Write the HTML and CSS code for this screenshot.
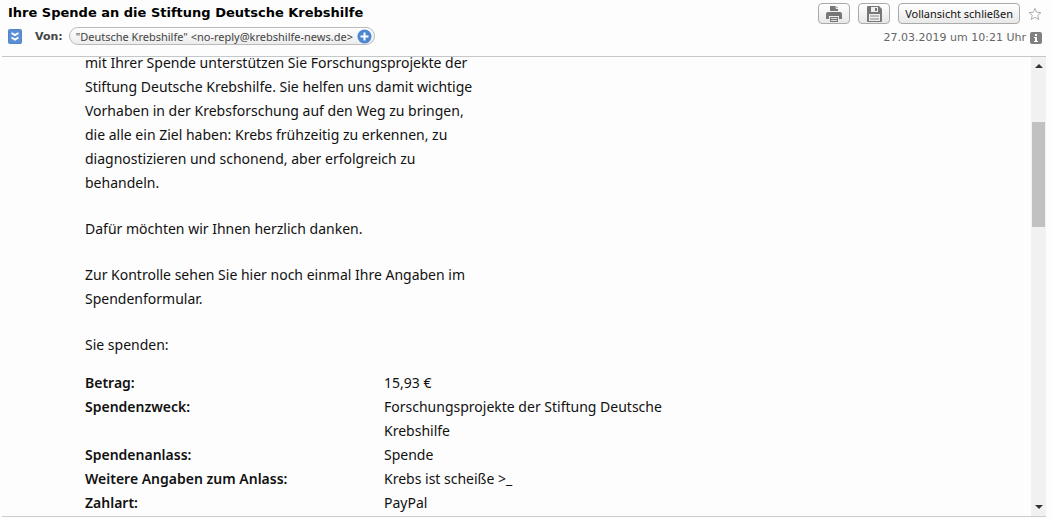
FILE: index.html
```html
<!DOCTYPE html>
<html lang="de">
<head>
    <meta charset="UTF-8">
    <meta name="viewport" content="width=device-width, initial-scale=1.0">
    <title>Ihre Spende an die Stiftung Deutsche Krebshilfe</title>
    <link rel="stylesheet" href="styles.css">
</head>
<body>
    <div class="mail">
        <header class="mail-header">
            <div class="header-left">
                <h1>Ihre Spende an die Stiftung Deutsche Krebshilfe</h1>
                <div class="sender-row">
                    <button class="icon-button expand" aria-label="Details anzeigen">
                        <svg width="14" height="15" viewBox="0 0 14 15">
                            <rect x="0.5" y="0.5" width="13" height="14" rx="1" fill="#5a8fd6" stroke="#5286cc"/>
                            <path d="M3.500 4l3.500 2 3.500-2M3.500 8.500l3.500 2 3.500-2" fill="none" stroke="#fff" stroke-width="2"/>
                        </svg>
                    </button>
                    <span class="sender-label">Von:</span>
                    <span class="sender">
                        <span>"Deutsche Krebshilfe" &lt;no-reply@krebshilfe-news.de&gt;</span>
                        <button class="icon-button" aria-label="Kontakt hinzufügen">
                            <svg width="15" height="15" viewBox="0 0 15 15">
                                <circle cx="7.500" cy="7.500" r="7" fill="#4b86cf"/>
                                <path d="M7.500 3.500v8M3.500 7.500h8" stroke="#fff" stroke-width="2"/>
                            </svg>
                        </button>
                    </span>
                </div>
            </div>
            <div class="header-right">
                <div class="toolbar">
                    <button class="button button_print" aria-label="Drucken">
                        <svg width="16" height="16" viewBox="0 0 16 16" fill="#777">
                            <path d="M4 0h6l2 2v3H4z"/>
                            <path d="M10 0v2.500h2" fill="none" stroke="#eee"/>
                            <path d="M2 6h12q2 0 2 2v5h-3v-3H3v3H0V8q0-2 2-2z"/>
                            <path d="M4 11h8v5H4z"/>
                            <path d="M5 12.500h6M5 14.500h6" stroke="#ddd"/>
                        </svg>
                    </button>
                    <button class="button button_save" aria-label="Speichern">
                        <svg width="15" height="16" viewBox="0 0 15 16">
                            <path d="M1 0h11l3 3v12q0 1-1 1H1q-1 0-1-1V1q0-1 1-1z" fill="#777"/>
                            <path d="M4 1h7v5H4z" fill="#eee"/>
                            <path d="M8 2h2v3H8z" fill="#777"/>
                            <path d="M2 8h11v7H2z" fill="#eee"/>
                            <path d="M3 10h9M3 13h9" stroke="#888" stroke-width="1"/>
                        </svg>
                    </button>
                    <button class="button button_close">Vollansicht schließen</button>
                    <button class="icon-button star" aria-label="Markieren">
                        <svg width="14" height="14" viewBox="0 0 14 14">
                            <path d="M7 1.300l1.700 4 4.300.3-3.300 2.700 1.100 4.300L7 10.300l-3.800 2.300 1.100-4.300L1 5.600l4.300-.3z" fill="#fff" stroke="#b0b0b0"/>
                        </svg>
                    </button>
                </div>
                <div class="date-row">
                    <time datetime="2019-03-27T10:21">27.03.2019 um 10:21 Uhr</time>
                    <button class="icon-button" aria-label="Informationen">
                        <svg width="12" height="12" viewBox="0 0 12 12">
                            <rect width="12" height="12" rx="2" fill="#808080"/>
                            <path d="M5 2h2v2H5zM4 5h3v4h1v1H4V9h1V6H4z" fill="#fff"/>
                        </svg>
                    </button>
                </div>
            </div>
        </header>

        <main class="mail-view">
            <div class="mail-body">
                <div class="letter">
                    <p>mit Ihrer Spende unterstützen Sie Forschungsprojekte der<br>
                    Stiftung Deutsche Krebshilfe. Sie helfen uns damit wichtige<br>
                    Vorhaben in der Krebsforschung auf den Weg zu bringen,<br>
                    die alle ein Ziel haben: Krebs frühzeitig zu erkennen, zu<br>
                    diagnostizieren und schonend, aber erfolgreich zu<br>
                    behandeln.</p>
                    <p>Dafür möchten wir Ihnen herzlich danken.</p>
                    <p>Zur Kontrolle sehen Sie hier noch einmal Ihre Angaben im<br>
                    Spendenformular.</p>
                    <p>Sie spenden:</p>
                </div>
                <table class="donation">
                    <tr><th scope="row">Betrag:</th><td>15,93 €</td></tr>
                    <tr><th scope="row">Spendenzweck:</th><td>Forschungsprojekte der Stiftung Deutsche<br>Krebshilfe</td></tr>
                    <tr><th scope="row">Spendenanlass:</th><td>Spende</td></tr>
                    <tr><th scope="row">Weitere Angaben zum Anlass:</th><td>Krebs ist scheiße &gt;_</td></tr>
                    <tr><th scope="row">Zahlart:</th><td>PayPal</td></tr>
                </table>
            </div>
            <div class="scrollbar">
                <button class="icon-button" aria-label="Nach oben">
                    <svg width="8" height="4" viewBox="0 0 8 4"><path d="M0 4l4-4 4 4z" fill="#333"/></svg>
                </button>
                <div class="track"><div class="thumb"></div></div>
                <button class="icon-button" aria-label="Nach unten">
                    <svg width="8" height="4" viewBox="0 0 8 4"><path d="M0 0l4 4 4-4z" fill="#333"/></svg>
                </button>
            </div>
        </main>
    </div>
</body>
</html>
```
FILE: styles.css
```css
* {
    box-sizing: border-box;
}

body {
    margin: 0;
    background-color: #fdfdfd;
    font-family: Verdana, "DejaVu Sans", sans-serif;
    font-size: 11px;
    color: #444444;
}

.mail {
    display: flex;
    flex-direction: column;
    height: 100vh;
    padding: 0 6px 1px 2px;
}

/* Header with subject, sender and tools */
.mail-header {
    display: flex;
    justify-content: space-between;
    padding: 3px 4px 11px 6px;
    border-bottom: 1px solid #c4c8c8;
}

h1 {
    margin: 0;
    font-size: 13px;
    line-height: 20px;
    color: #000000;
}

.sender-row {
    display: flex;
    align-items: center;
    margin-top: 4px;
}

.sender-label {
    margin: 0 6px 0 13px;
    font-weight: bold;
}

.sender {
    display: flex;
    align-items: center;
    gap: 4px;
    height: 18px;
    padding: 0 2px 0 6px;
    border: 1px solid #bbbbbb;
    border-radius: 9px;
    background: linear-gradient(#ffffff, #ececec);
    font-family: "Noto Sans", sans-serif;
}

.icon-button {
    display: flex;
    align-items: center;
    justify-content: center;
    padding: 0;
    border: none;
    background: none;
    cursor: pointer;
}

.header-right {
    display: flex;
    flex-direction: column;
    align-items: flex-end;
    gap: 7px;
}

.toolbar {
    display: flex;
    align-items: center;
    gap: 8px;
}

.button {
    display: flex;
    align-items: center;
    justify-content: center;
    height: 21px;
    padding: 0 6px;
    border: 1px solid #aaaaaa;
    border-radius: 4px;
    background: linear-gradient(#ffffff, #e8e8e8);
    font-family: "Noto Sans", sans-serif;
    font-size: 11px;
    color: #111111;
    cursor: pointer;
}

.button_print,
.button_save {
    width: 32px;
}

.date-row {
    display: flex;
    align-items: center;
    gap: 4px;
    color: #666666;
}

/* Scrolled message */
.mail-view {
    display: flex;
    flex: 1;
    min-height: 0;
    border-bottom: 1px solid #cccccc;
}

.mail-body {
    flex: 1;
    overflow: hidden;
    padding-left: 83px;
    font-family: "Noto Sans", sans-serif;
    font-size: 14px;
    line-height: 24px;
    color: #111111;
}

.letter {
    margin-top: -6px;
}

.letter p {
    margin: 0 0 22px;
}

.donation {
    margin-top: -8px;
    border-collapse: collapse;
}

.donation th,
.donation td {
    padding: 0;
    text-align: left;
    vertical-align: top;
}

.donation th {
    width: 299px;
    font-weight: 600;
}

.scrollbar {
    display: flex;
    flex-direction: column;
    width: 15px;
    background-color: #f1f1f1;
}

.scrollbar .icon-button {
    height: 18px;
}

.track {
    flex: 1;
    padding: 47px 1px 0;
}

.thumb {
    height: 28%;
    min-height: 24px;
    background-color: #c1c1c1;
}
```
